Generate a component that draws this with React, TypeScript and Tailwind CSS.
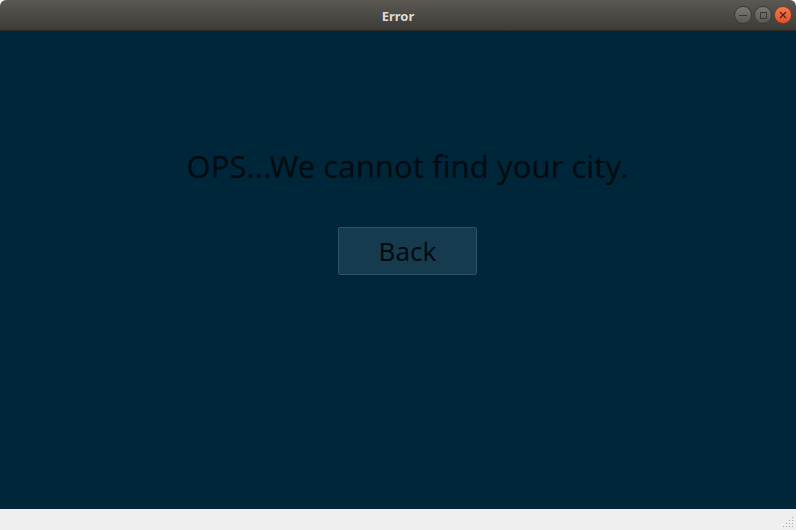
export default function App() {
  return (
    <div className="w-[796px] h-[530px] flex flex-col overflow-hidden" style={{ fontFamily: '"Noto Sans", "Open Sans", sans-serif' }}>
      {/* title bar */}
      <div className="relative h-[31px] shrink-0 flex items-center justify-center pt-[3px] rounded-t-[6px] bg-gradient-to-b from-[#5b5852] to-[#3d3c38] border-b border-[#2a2926]">
        <span className="text-[13px] font-bold text-[#dfdbd2]">Error</span>
        <div className="absolute right-[4px] top-[6px] flex gap-[2px]">
          <span className="w-[18px] h-[18px] rounded-full bg-gradient-to-b from-[#7d7a74] to-[#5a5853] border border-[#3a3935] flex items-center justify-center">
            <span className="w-[8px] h-[1px] bg-[#3a3935]" />
          </span>
          <span className="w-[18px] h-[18px] rounded-full bg-gradient-to-b from-[#7d7a74] to-[#5a5853] border border-[#3a3935] flex items-center justify-center">
            <span className="w-[7px] h-[7px] border border-[#3a3935]" />
          </span>
          <span className="w-[18px] h-[18px] rounded-full bg-gradient-to-b from-[#f37b4f] to-[#e0532a] border border-[#8a3b20] flex items-center justify-center">
            <svg width="8" height="8" viewBox="0 0 8 8">
              <path d="M1 1 L7 7 M7 1 L1 7" stroke="#5a2412" strokeWidth="1.3" />
            </svg>
          </span>
        </div>
      </div>

      {/* content */}
      <div className="flex-1 bg-[#002639] flex flex-col items-center pl-[19px]">
        <p className="mt-[113px] text-[31px] leading-[44px] text-[#030b10] tracking-[0px]">OPS...We cannot find your city.</p>
        <button className="mt-[39px] w-[139px] h-[48px] bg-[#163b4f] border border-[#2d5366] rounded-[2px] text-[26px] text-[#030b10]">
          Back
        </button>
      </div>

      {/* status bar */}
      <div className="h-[21px] shrink-0 bg-[#efefef] flex justify-end items-end pr-[2px] pb-[2px]">
        <svg width="12" height="12" viewBox="0 0 12 12">
          <g fill="#a8a8a8">
            <rect x="10" y="1" width="1" height="1" />
            <rect x="7" y="4" width="1" height="1" />
            <rect x="10" y="4" width="1" height="1" />
            <rect x="4" y="7" width="1" height="1" />
            <rect x="7" y="7" width="1" height="1" />
            <rect x="10" y="7" width="1" height="1" />
            <rect x="1" y="10" width="1" height="1" />
            <rect x="4" y="10" width="1" height="1" />
            <rect x="7" y="10" width="1" height="1" />
            <rect x="10" y="10" width="1" height="1" />
          </g>
        </svg>
      </div>
    </div>
  );
}
